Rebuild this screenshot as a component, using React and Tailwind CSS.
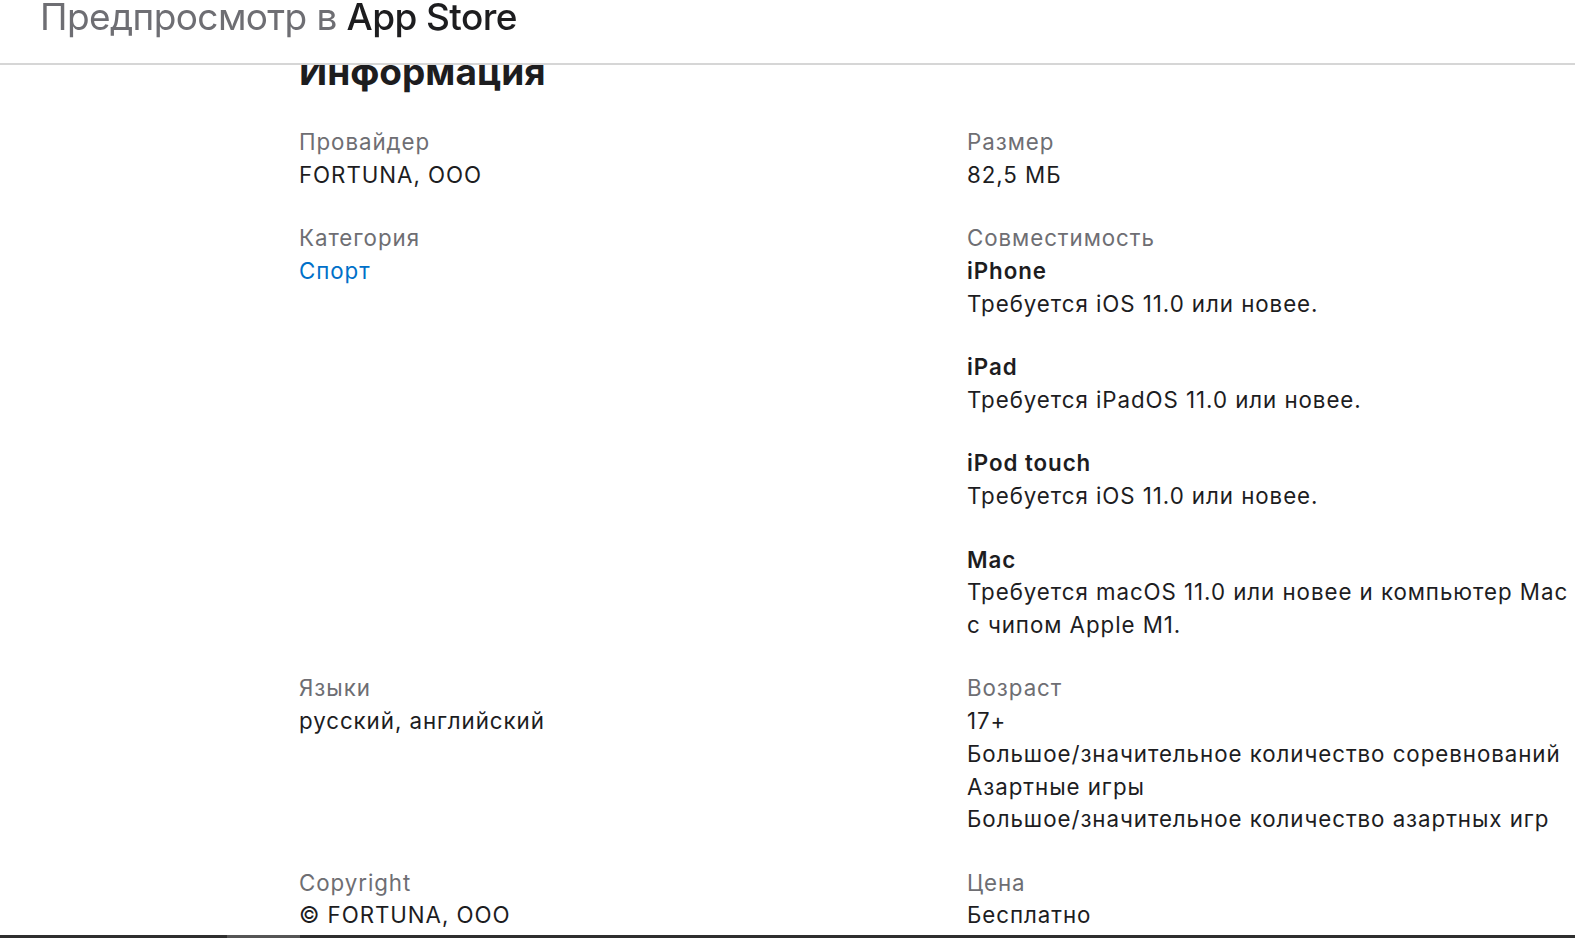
import React from 'react';

const font = { fontFamily: 'Inter, "Noto Sans", sans-serif' };

function Field({ label, children }) {
  return (
    <div>
      <dt className="text-[#6e6e73]">{label}</dt>
      <dd className="text-[#1d1d1f]">{children}</dd>
    </div>
  );
}

function Device({ name, children }) {
  return (
    <div>
      <div className="font-semibold text-[#1d1d1f]">{name}</div>
      <div className="text-[#1d1d1f] whitespace-nowrap">{children}</div>
    </div>
  );
}

export default function App() {
  return (
    <div className="relative min-h-[938px] bg-white overflow-hidden" style={font}>
      {/* Sticky preview header */}
      <header className="fixed top-0 left-0 right-0 z-10 h-[65px] bg-white border-b-2 border-[#d6d6d6]">
        <div className="pl-[40px] -mt-[6px] text-[37px] leading-[46px] tracking-[-0.6px] whitespace-nowrap">
          <span className="text-[#6e6e73]">Предпросмотр в </span>
          <span className="text-[#1d1d1f] font-medium">App Store</span>
        </div>
      </header>

      <main className="pl-[299px] pt-[50px]">
        <h2 className="text-[37px] leading-[44px] font-bold text-[#1d1d1f] tracking-[0px]">Информация</h2>

        <dl className="mt-[32px] grid grid-cols-[668px_1fr] gap-y-[30.8px] text-[22.3px] leading-[32.7px] tracking-[0.95px]">
          <Field label="Провайдер">FORTUNA, ООО</Field>
          <Field label="Размер">82,5 МБ</Field>

          <div>
            <dt className="text-[#6e6e73]">Категория</dt>
            <dd>
              <a href="#" className="text-[#0070c9]">Спорт</a>
            </dd>
          </div>
          <div>
            <dt className="text-[#6e6e73]">Совместимость</dt>
            <dd className="flex flex-col gap-[30.8px]">
              <Device name="iPhone">Требуется iOS 11.0 или новее.</Device>
              <Device name="iPad">Требуется iPadOS 11.0 или новее.</Device>
              <Device name="iPod touch">Требуется iOS 11.0 или новее.</Device>
              <Device name="Mac">
                Требуется macOS 11.0 или новее и компьютер Mac
                <br />
                с чипом Apple M1.
              </Device>
            </dd>
          </div>

          <Field label="Языки">русский, английский</Field>
          <div>
            <dt className="text-[#6e6e73]">Возраст</dt>
            <dd className="text-[#1d1d1f] whitespace-nowrap">
              <div>17+</div>
              <div>Большое/значительное количество соревнований</div>
              <div>Азартные игры</div>
              <div>Большое/значительное количество азартных игр</div>
            </dd>
          </div>

          <Field label="Copyright">© FORTUNA, ООО</Field>
          <Field label="Цена">Бесплатно</Field>
        </dl>
      </main>

      {/* bottom scroll strip */}
      <div className="fixed bottom-0 left-0 right-0 h-[3px] flex">
        <div className="w-[227px] bg-[#2e2e2e]" />
        <div className="w-[73px] bg-[#555555]" />
        <div className="flex-1 bg-[#2e2e2e]" />
      </div>
    </div>
  );
}
